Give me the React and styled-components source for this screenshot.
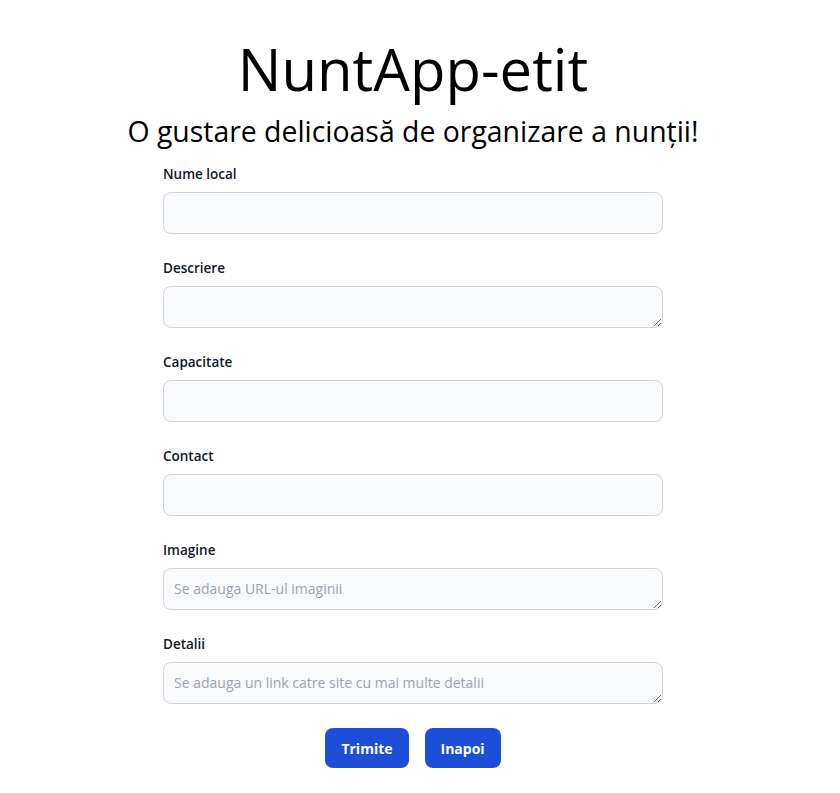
import React from 'react';
import styled, { createGlobalStyle } from 'styled-components';

const GlobalStyle = createGlobalStyle`
    body {
        margin: 0;
        background: #fff;
        font-family: "Open Sans", "Noto Sans", sans-serif;
        color: #111827;
    }
`;

const Page = styled.div`
    width: 826px;
    display: flex;
    flex-direction: column;
    align-items: center;
    padding-top: 40px;
`;

const Title = styled.h1`
    margin: 0;
    font-size: 58px;
    font-weight: 400;
    line-height: 1;
    color: #000;
`;

const Subtitle = styled.h2`
    margin: 15px 0 0;
    font-size: 28.4px;
    font-weight: 400;
    line-height: 36px;
    color: #000;
`;

const Form = styled.form`
    width: 500px;
    margin-top: 15px;
`;

const Field = styled.div`
    margin-bottom: 24px;
`;

const Label = styled.label`
    display: block;
    margin-bottom: 8px;
    font-size: 13.5px;
    line-height: 20px;
    font-weight: 600;
    color: #111827;
`;

const fieldCss = `
    display: block;
    box-sizing: border-box;
    width: 100%;
    padding: 10px;
    font-family: inherit;
    font-size: 14px;
    line-height: 20px;
    color: #111827;
    background: #f9fafb;
    border: 1px solid #d1d5db;
    border-radius: 8px;
    outline: none;
    &::placeholder {
        color: #9ca3af;
    }
`;

const Input = styled.input`
    ${fieldCss}
    height: 42px;
`;

const Area = styled.textarea`
    ${fieldCss}
    height: 42px;
    resize: vertical;
`;

const Buttons = styled.div`
    display: flex;
    justify-content: center;
    gap: 16px;
`;

const Button = styled.button`
    height: 40px;
    padding: 0 16px;
    border: none;
    border-radius: 8px;
    background: #1d4ed8;
    color: #fff;
    font-family: inherit;
    font-size: 14px;
    font-weight: 700;
    cursor: pointer;
`;

const fields = [
    { label: 'Nume local', area: false },
    { label: 'Descriere', area: true },
    { label: 'Capacitate', area: false },
    { label: 'Contact', area: false },
    { label: 'Imagine', area: true, placeholder: 'Se adauga URL-ul imaginii' },
    { label: 'Detalii', area: true, placeholder: 'Se adauga un link catre site cu mai multe detalii' },
];

const App = () => {
    return (
        <>
            <GlobalStyle />
            <Page>
                <Title>NuntApp-etit</Title>
                <Subtitle>O gustare delicioasă de organizare a nunții!</Subtitle>
                <Form onSubmit={e => e.preventDefault()}>
                    {fields.map(f => (
                        <Field key={f.label}>
                            <Label>{f.label}</Label>
                            {f.area
                                ? <Area rows={1} placeholder={f.placeholder} />
                                : <Input type="text" />}
                        </Field>
                    ))}
                    <Buttons>
                        <Button type="submit">Trimite</Button>
                        <Button type="button">Inapoi</Button>
                    </Buttons>
                </Form>
            </Page>
        </>
    );
};

export default App;
